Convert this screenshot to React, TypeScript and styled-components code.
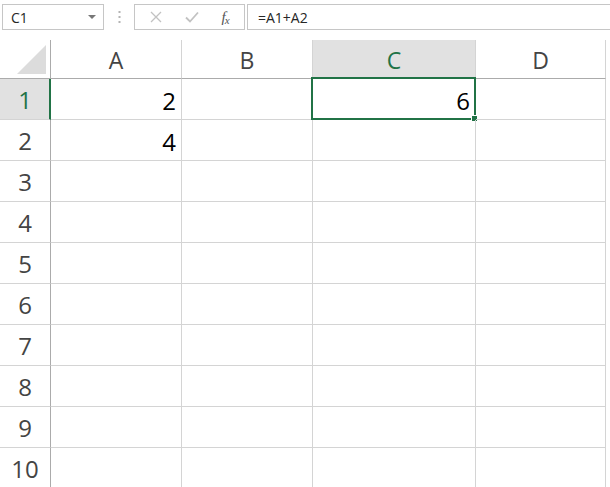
import React from "react";
import styled, { createGlobalStyle } from "styled-components";

const GlobalStyle = createGlobalStyle`
  html, body {
    margin: 0;
    padding: 0;
    background: #ffffff;
    overflow: hidden;
  }
  body {
    font-family: "Open Sans", "Noto Sans", sans-serif;
  }
`;

const GREEN = "#217346";

const Page = styled.div`
  width: 610px;
  height: 487px;
  overflow: hidden;
  background: #fff;
`;

const Toolbar = styled.div`
  display: flex;
  align-items: flex-start;
  height: 40px;
  padding: 4px 0 0 2px;
  box-sizing: border-box;
`;

const NameBox = styled.div`
  width: 102px;
  height: 26px;
  box-sizing: border-box;
  border: 1px solid #c6c6c6;
  display: flex;
  align-items: center;
  justify-content: space-between;
  padding: 0 7px 0 8px;
  font-size: 14px;
  color: #262626;
`;

const Caret = styled.span`
  width: 0;
  height: 0;
  border-left: 4px solid transparent;
  border-right: 4px solid transparent;
  border-top: 4px solid #777;
`;

const Grip = styled.div`
  width: 30px;
  height: 26px;
  display: flex;
  align-items: center;
  justify-content: center;
`;

const Buttons = styled.div`
  width: 111px;
  height: 26px;
  box-sizing: border-box;
  border: 1px solid #c6c6c6;
  display: flex;
  align-items: center;
  justify-content: space-around;
  padding: 0 4px;
`;

const Fx = styled.span`
  font-family: "Liberation Serif", serif;
  font-style: italic;
  font-size: 15px;
  color: #555;
  letter-spacing: -1px;
`;

const FxSub = styled.span`
  font-size: 11px;
  position: relative;
  top: 2px;
`;

const FormulaBox = styled.div`
  flex: 1;
  margin-left: 2px;
  height: 26px;
  box-sizing: border-box;
  border: 1px solid #c6c6c6;
  border-right: none;
  display: flex;
  align-items: center;
  padding-left: 10px;
  font-size: 14px;
  color: #262626;
`;

const Sheet = styled.div`
  display: grid;
  grid-template-columns: 51px 131px 131px 163px 130px 1fr;
  grid-auto-rows: 41px;
  grid-template-rows: 39px;
`;

const Corner = styled.div`
  border-right: 1px solid #ababab;
  border-bottom: 1px solid #ababab;
  position: relative;
  background: #fff;
`;

const Triangle = styled.div`
  position: absolute;
  right: 4px;
  bottom: 4px;
  width: 0;
  height: 0;
  border-left: 29px solid transparent;
  border-bottom: 29px solid #dcdcdc;
`;

const ColHead = styled.div<{ $active?: boolean }>`
  border-right: 1px solid #d4d4d4;
  border-bottom: 1px solid #ababab;
  background: ${(p) => (p.$active ? "#e1e1e1" : "#fff")};
  color: ${(p) => (p.$active ? GREEN : "#444")};
  font-size: 23px;
  display: flex;
  align-items: center;
  justify-content: center;
  padding-top: 2px;
  box-sizing: border-box;
`;

const RowHead = styled.div<{ $active?: boolean }>`
  border-right: ${(p) => (p.$active ? `2px solid ${GREEN}` : "1px solid #ababab")};
  border-bottom: 1px solid #d4d4d4;
  background: ${(p) => (p.$active ? "#e1e1e1" : "#fff")};
  color: ${(p) => (p.$active ? GREEN : "#444")};
  font-size: 24px;
  display: flex;
  align-items: center;
  justify-content: center;
  box-sizing: border-box;
  padding-left: ${(p) => (p.$active ? "1px" : "0")};
`;

const Cell = styled.div<{ $last?: boolean }>`
  border-right: ${(p) => (p.$last ? "none" : "1px solid #d4d4d4")};
  border-bottom: ${(p) => (p.$last ? "none" : "1px solid #d4d4d4")};
  font-size: 24px;
  color: #000;
  display: flex;
  align-items: center;
  justify-content: flex-end;
  padding: 3px 5px 0 0;
  box-sizing: border-box;
  position: relative;
`;

const Selection = styled.div`
  position: absolute;
  left: -2px;
  top: -2px;
  right: -1px;
  bottom: -1px;
  border: 2px solid ${GREEN};
  pointer-events: none;
`;

const Handle = styled.div`
  position: absolute;
  right: -4px;
  bottom: -4px;
  width: 5px;
  height: 5px;
  background: ${GREEN};
  border: 1px solid #fff;
`;

const cols = ["A", "B", "C", "D"];
const values: Record<string, string> = { A1: "2", A2: "4", C1: "6" };

export default function App() {
  const rows = Array.from({ length: 10 }, (_, i) => i + 1);
  return (
    <Page>
      <GlobalStyle />
      <Toolbar>
        <NameBox>
          C1
          <Caret />
        </NameBox>
        <Grip>
          <svg width="3" height="12" viewBox="0 0 3 12">
            <rect x="0.5" y="0" width="2" height="2" fill="#b4b4b4" />
            <rect x="0.5" y="5" width="2" height="2" fill="#b4b4b4" />
            <rect x="0.5" y="10" width="2" height="2" fill="#b4b4b4" />
          </svg>
        </Grip>
        <Buttons>
          <svg width="12" height="12" viewBox="0 0 12 12">
            <path d="M1 1 L11 11 M11 1 L1 11" stroke="#c2c2c2" strokeWidth="1.3" />
          </svg>
          <svg width="14" height="12" viewBox="0 0 14 12">
            <path d="M1 6.5 L5 10.5 L13 1.5" stroke="#c2c2c2" strokeWidth="1.8" fill="none" />
          </svg>
          <Fx>
            f<FxSub>x</FxSub>
          </Fx>
        </Buttons>
        <FormulaBox>=A1+A2</FormulaBox>
      </Toolbar>
      <Sheet>
        <Corner>
          <Triangle />
        </Corner>
        {cols.map((c) => (
          <ColHead key={c} $active={c === "C"}>
            {c}
          </ColHead>
        ))}
        <Cell $last />
        {rows.map((r) => (
          <React.Fragment key={r}>
            <RowHead $active={r === 1}>{r}</RowHead>
            {cols.map((c) => (
              <Cell key={c}>
                {values[c + r] ?? ""}
                {c === "C" && r === 1 && (
                  <Selection>
                    <Handle />
                  </Selection>
                )}
              </Cell>
            ))}
            <Cell $last />
          </React.Fragment>
        ))}
      </Sheet>
    </Page>
  );
}
